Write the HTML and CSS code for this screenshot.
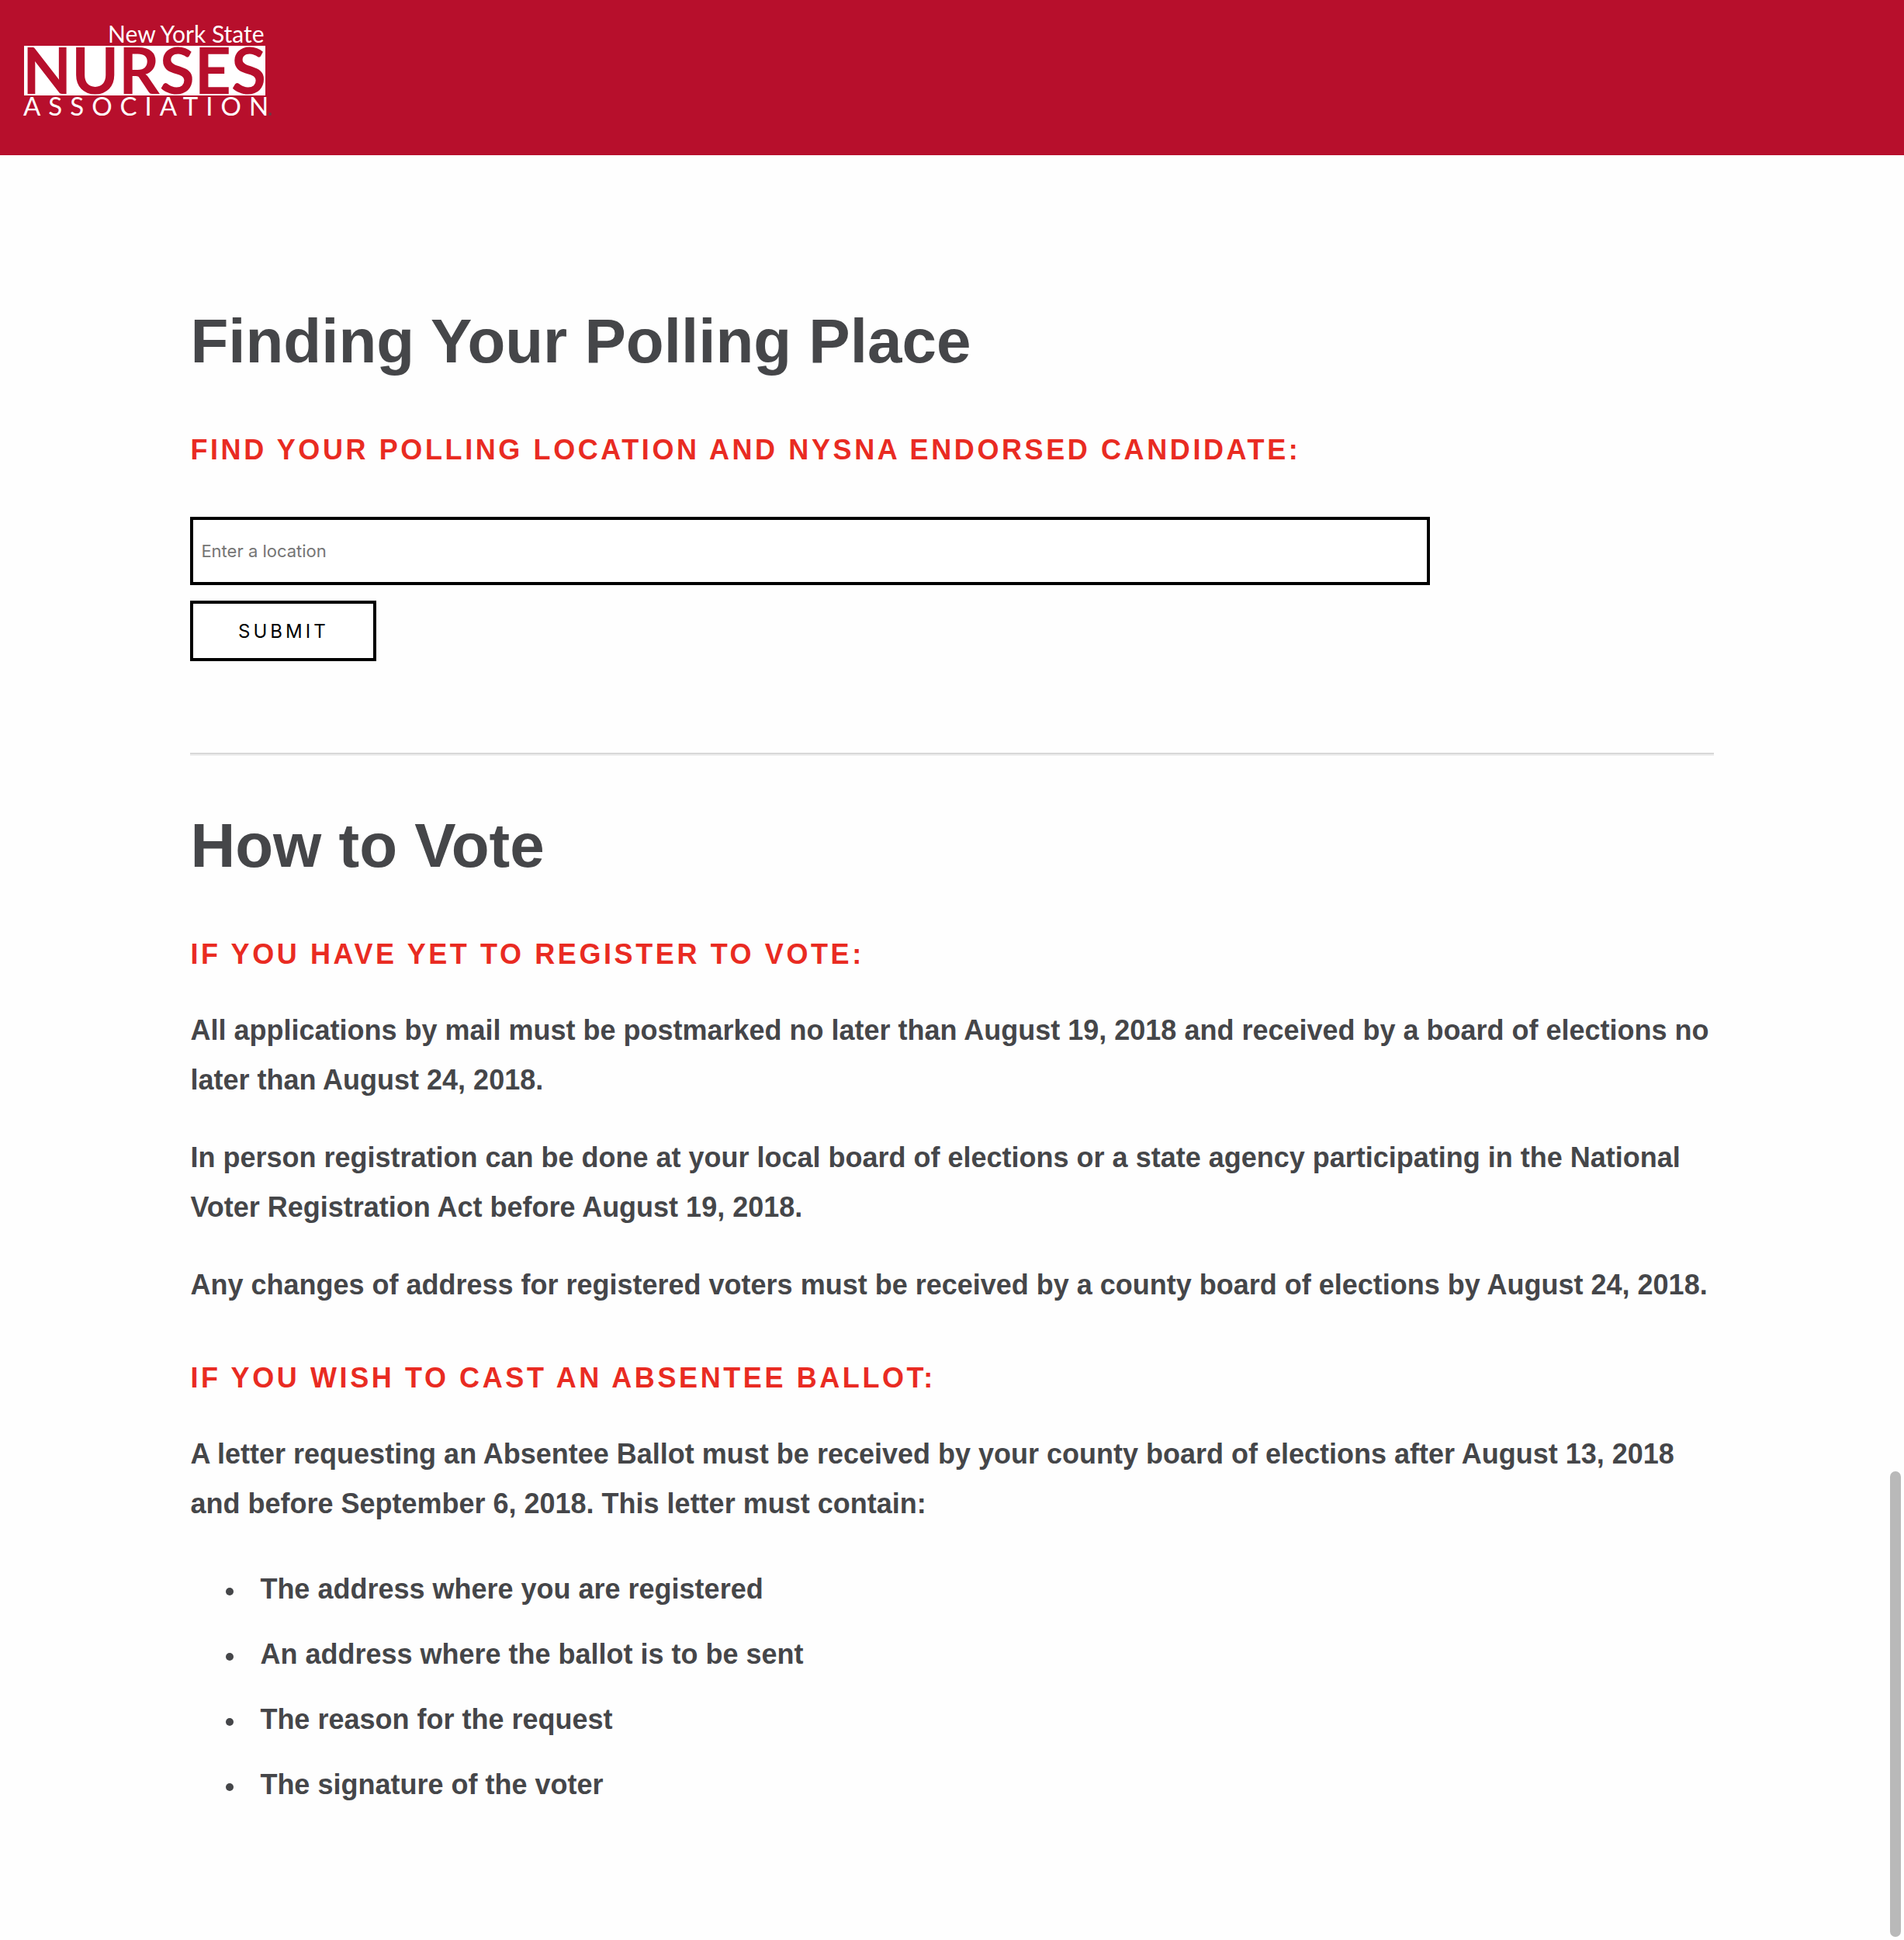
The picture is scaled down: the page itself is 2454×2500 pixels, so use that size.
FILE: index.html
```html
<!DOCTYPE html>
<html lang="en">
<head>
  <meta charset="utf-8">
  <meta name="viewport" content="width=device-width, initial-scale=1">
  <title>New York State Nurses Association</title>
  <link rel="stylesheet" href="styles.css">
</head>
<body>
  <header class="site-header">
    <a class="logo" href="/" aria-label="New York State Nurses Association">
      <svg class="logo-art" viewBox="0 0 330 130" width="330" height="130" aria-hidden="true">
        <text class="logo-state" x="109" y="29">New York State</text>
        <rect class="logo-band" x="1" y="33" width="311" height="64"/>
        <text class="logo-name" x="-1" y="95">NURSES</text>
        <text class="logo-association" x="0" y="123">ASSOCIATION</text>
        <circle class="logo-mark" cx="318" cy="121" r="2"/>
      </svg>
    </a>
  </header>

  <main class="content">
    <section class="section">
      <h1 class="title">Finding Your Polling Place</h1>
      <h2 class="subtitle"><label for="location">Find your polling location and NYSNA endorsed candidate:</label></h2>
      <form class="lookup">
        <input class="lookup-input" id="location" name="location" type="text" placeholder="Enter a location">
        <button class="lookup-submit" type="submit">Submit</button>
      </form>
    </section>

    <hr class="divider">

    <section class="section">
      <h1 class="title">How to Vote</h1>
      <h2 class="subtitle">If you have yet to register to vote:</h2>
      <p class="copy">All applications by mail must be postmarked no later than August 19, 2018 and received by a board of elections no later than August 24, 2018.</p>
      <p class="copy">In person registration can be done at your local board of elections or a state agency participating in the National Voter Registration Act before August 19, 2018.</p>
      <p class="copy">Any changes of address for registered voters must be received by a county board of elections by August 24, 2018.</p>
      <h2 class="subtitle">If you wish to cast an absentee ballot:</h2>
      <p class="copy">A letter requesting an Absentee Ballot must be received by your county board of elections after August 13, 2018 and before September 6, 2018. This letter must contain:</p>
      <ul class="list">
        <li class="list-item">The address where you are registered</li>
        <li class="list-item">An address where the ballot is to be sent</li>
        <li class="list-item">The reason for the request</li>
        <li class="list-item">The signature of the voter</li>
      </ul>
    </section>
  </main>
  <div class="scroll-thumb" aria-hidden="true"></div>
</body>
</html>
```
FILE: styles.css
```css
* {
  box-sizing: border-box;
}

body {
  margin: 0;
  background: #fefefe;
  color: #454649;
  font: bold 36px/64px "Liberation Sans", Arial, sans-serif;
}

.site-header {
  display: flex;
  padding: 26px 30px 44px;
  background: #b70f2c;
}

.logo {
  display: block;
}

.logo-art {
  display: block;
  overflow: visible;
}

.logo-state,
.logo-association {
  fill: #fff;
  font-family: Lato, sans-serif;
  font-weight: 400;
}

.logo-state {
  font-size: 30px;
}

.logo-band {
  fill: #fff;
}

.logo-name {
  fill: #b70f2c;
  font: 700 82px Lato, sans-serif;
}

.logo-association {
  font-size: 33px;
  letter-spacing: 10px;
}

.logo-mark {
  fill: #6b3a44;
}

.content {
  padding: 192px 10% 80px;
}

.title {
  margin: 0 0 70px;
  font-size: 80px;
  line-height: 96px;
}

.subtitle {
  margin: 66px 0 44px;
  color: #e92b22;
  font-size: 36px;
  line-height: 44px;
  letter-spacing: 0.1em;
  text-transform: uppercase;
}

.lookup {
  display: flex;
  flex-direction: column;
  align-items: flex-start;
  gap: 20px;
  margin-top: 64px;
}

.lookup-input,
.lookup-submit {
  border: 4px solid #000;
  border-radius: 0;
  background: #fff;
  font-family: Inter, sans-serif;
}

.lookup-input {
  width: 1598px;
  max-width: 100%;
  height: 88px;
  padding: 0 10px;
  font-size: 22px;
}

.lookup-input::placeholder {
  color: #757575;
}

.lookup-submit {
  width: 240px;
  height: 78px;
  color: #000;
  font-size: 24px;
  letter-spacing: 4px;
  text-transform: uppercase;
}

.divider {
  height: 4px;
  margin: 118px 0 68px;
  border: solid #d8d8d8;
  border-width: 2px 0 0;
  background: #eee;
}

.copy {
  margin: 0 0 36px;
}

.list {
  margin: 0;
  padding: 0 0 0 46px;
  list-style: none;
}

.list-item {
  display: flex;
  align-items: center;
  gap: 34px;
  padding: 10px 0;
}

.list-item::before {
  content: "";
  width: 10px;
  height: 10px;
  margin-top: 6px;
  border-radius: 50%;
  background: currentColor;
}

.scroll-thumb {
  position: fixed;
  right: 4px;
  bottom: 4px;
  width: 14px;
  height: 24%;
  border-radius: 7px;
  background: #b9b9b9;
}
```
